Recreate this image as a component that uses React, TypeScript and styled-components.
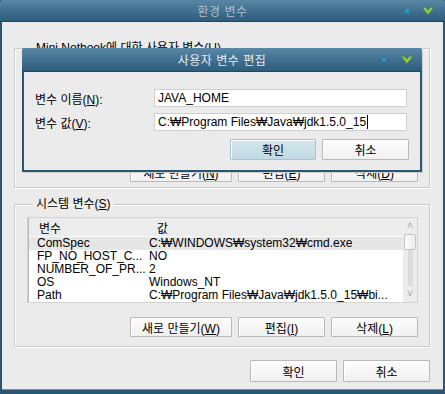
import styled, { createGlobalStyle } from 'styled-components'

// 전역 스타일
const GlobalStyle = createGlobalStyle`
  html, body {
    margin: 0;
    padding: 0;
    background: #ebebeb;
  }
  * {
    box-sizing: border-box;
  }
`

const FONT = `"Liberation Sans", "Noto Sans CJK KR", sans-serif`

// 창 아이콘 (작은 사각형 + 초록색 꺾쇠)
const TitleIcons = ({ small }: { small?: boolean }) => (
  <IconGroup $small={small}>
    <Dot />
    <svg width="12" height="8" viewBox="0 0 12 8">
      <polygon
        points="0.5,0.5 3.5,0.5 6,3.6 8.5,0.5 11.5,0.5 6,7.5"
        fill="#98d448"
        stroke="#5d9a2c"
        strokeWidth="0.8"
        strokeLinejoin="round"
      />
    </svg>
  </IconGroup>
)

const Mn = ({ children }: { children: string }) => <U>{children}</U>

const systemVars = [
  { name: 'ComSpec', value: 'C:₩WINDOWS₩system32₩cmd.exe', selected: true },
  { name: 'FP_NO_HOST_C...', value: 'NO' },
  { name: 'NUMBER_OF_PR...', value: '2' },
  { name: 'OS', value: 'Windows_NT' },
  { name: 'Path', value: 'C:₩Program Files₩Java₩jdk1.5.0_15₩bi...' },
]

const App = () => {
  return (
    <>
      <GlobalStyle />
      <Window>
        <TitleBar>
          <Title>환경 변수</Title>
          <TitleIcons />
        </TitleBar>
        <Body>
          <Group $gap={0}>
            <Legend>
              Mini Notbook에 대한 사용자 변수(<Mn>U</Mn>)
            </Legend>
            <ListBox $height={87} />
            <ButtonRow $top={14}>
              <Button $w={102} $h={20}>새로 만들기(<Mn>N</Mn>)</Button>
              <Button $w={87} $h={20}>편집(<Mn>E</Mn>)</Button>
              <Button $w={87} $h={20}>삭제(<Mn>D</Mn>)</Button>
            </ButtonRow>
          </Group>

          <Group $gap={8}>
            <Legend>
              시스템 변수(<Mn>S</Mn>)
            </Legend>
            <ListBox $height={86}>
              <ListInner>
                <HeaderRow>
                  <HeadCell $w={118}>변수</HeadCell>
                  <HeadCell>값</HeadCell>
                </HeaderRow>
                {systemVars.map((v) => (
                  <Row key={v.name} $selected={v.selected}>
                    <Cell $w={112}>{v.name}</Cell>
                    <Cell>{v.value}</Cell>
                  </Row>
                ))}
              </ListInner>
              <ScrollBar>
                <Arrow>˄</Arrow>
                <Thumb />
                <Track />
                <Arrow>˅</Arrow>
              </ScrollBar>
            </ListBox>
            <ButtonRow $top={14}>
              <Button $w={102} $h={20}>새로 만들기(<Mn>W</Mn>)</Button>
              <Button $w={87} $h={20}>편집(<Mn>I</Mn>)</Button>
              <Button $w={87} $h={20}>삭제(<Mn>L</Mn>)</Button>
            </ButtonRow>
          </Group>

          <ButtonRow $top={13}>
            <Button $w={87} $h={22}>확인</Button>
            <Button $w={87} $h={22}>취소</Button>
          </ButtonRow>
        </Body>

        <Dialog>
          <DialogTitleBar>
            <DialogTitle>사용자 변수 편집</DialogTitle>
            <TitleIcons small />
          </DialogTitleBar>
          <DialogBody>
            <FormGrid>
              <Label>
                변수 이름(<Mn>N</Mn>):
              </Label>
              <Input>JAVA_HOME</Input>
              <Label>
                변수 값(<Mn>V</Mn>):
              </Label>
              <Input>
                C:₩Program Files₩Java₩jdk1.5.0_15
                <Caret />
              </Input>
            </FormGrid>
            <ButtonRow $top={8}>
              <Button $w={86} $h={21} $primary>확인</Button>
              <Button $w={87} $h={21}>취소</Button>
            </ButtonRow>
          </DialogBody>
        </Dialog>
      </Window>
    </>
  )
}

// 스타일
const Window = styled.div`
  position: relative;
  width: 445px;
  height: 394px;
  display: flex;
  flex-direction: column;
  background: #ebebeb;
  border-left: 2px solid #2a5674;
  border-right: 2px solid #2a5674;
  border-bottom: 4px solid #2a5674;
  box-shadow: inset 0 -1px 0 #6f94ad;
  font-family: ${FONT};
  font-size: 12px;
  color: #000;
`

const TitleBar = styled.div`
  position: relative;
  height: 22px;
  margin: 0 -2px;
  display: flex;
  align-items: center;
  justify-content: center;
  background: linear-gradient(#5a87a5, #3f6e8e 55%, #2f5d7c);
  border-bottom: 1px solid #1f4864;
  border-radius: 3px 3px 0 0;
`

const Title = styled.span`
  font-size: 12px;
  color: #a9bfd0;
  letter-spacing: 0.5px;
  margin-top: -1px;
`

const IconGroup = styled.div<{ $small?: boolean }>`
  position: absolute;
  right: ${(p) => (p.$small ? 9 : 11)}px;
  top: 0;
  bottom: 0;
  display: flex;
  align-items: center;
  gap: ${(p) => (p.$small ? 15 : 13)}px;
`

const Dot = styled.span`
  width: 4px;
  height: 4px;
  background: #1b9dc0;
`

const Body = styled.div`
  flex: 1;
  display: flex;
  flex-direction: column;
  padding: 18px 13px 0 12px;
`

const Group = styled.fieldset<{ $gap: number }>`
  margin: ${(p) => p.$gap}px 0 0 0;
  padding: 5px 11px 5px 12px;
  border: 1px solid #c9c9c9;
  box-shadow: inset 1px 1px 0 #fff, 1px 1px 0 #fff;
  min-width: 0;

  & + & {
    padding-bottom: 9px;
  }
`

const Legend = styled.legend`
  margin-left: 6px;
  padding: 0 3px;
  line-height: 16px;
  font-size: 12px;
  white-space: nowrap;
`

const U = styled.span`
  text-decoration: underline;
  text-underline-offset: 1px;
`

const ListBox = styled.div<{ $height: number }>`
  height: ${(p) => p.$height}px;
  display: flex;
  background: #fff;
  border: 1px solid #d2d2d2;
  box-shadow: inset 1px 1px 0 #b8b8b8;
`

const ListInner = styled.div`
  flex: 1;
  display: flex;
  flex-direction: column;
  min-width: 0;
  padding-left: 1px;
`

const HeaderRow = styled.div`
  display: flex;
  height: 19px;
  align-items: center;
  background: #ececec;
  border-bottom: 1px solid #fafafa;
  padding-left: 10px;
  flex-shrink: 0;
`

const HeadCell = styled.span<{ $w?: number }>`
  width: ${(p) => (p.$w ? `${p.$w}px` : 'auto')};
  font-size: 12px;
`

const Row = styled.div<{ $selected?: boolean }>`
  display: flex;
  height: 13px;
  line-height: 13px;
  padding-left: 8px;
  background: ${(p) => (p.$selected ? '#e6e6e6' : 'transparent')};
  flex-shrink: 0;
`

const Cell = styled.span<{ $w?: number }>`
  width: ${(p) => (p.$w ? `${p.$w}px` : 'auto')};
  flex-shrink: 0;
  white-space: nowrap;
  font-size: 12px;
`

const ScrollBar = styled.div`
  width: 14px;
  display: flex;
  flex-direction: column;
  align-items: center;
  background: #ececec;
  padding-bottom: 2px;
`

const Arrow = styled.span`
  height: 14px;
  line-height: 14px;
  font-size: 11px;
  color: #a8a8a8;
`

const Thumb = styled.div`
  width: 12px;
  height: 16px;
  margin-top: 2px;
  background: linear-gradient(90deg, #fbfbfb, #ececec);
  border: 1px solid #c4c4c4;
  border-radius: 2px;
`

const Track = styled.div`
  width: 5px;
  flex: 1;
  background: #dcdcdc;
`

const ButtonRow = styled.div<{ $top: number }>`
  display: flex;
  justify-content: flex-end;
  gap: 6px;
  margin-top: ${(p) => p.$top}px;
`

const Button = styled.button<{ $w: number; $h: number; $primary?: boolean }>`
  width: ${(p) => p.$w}px;
  height: ${(p) => p.$h}px;
  padding: 0;
  font-family: ${FONT};
  font-size: 12px;
  color: #000;
  background: ${(p) =>
    p.$primary ? 'linear-gradient(#d3e6ec, #c2dae3)' : 'linear-gradient(#fdfdfd, #f0f0f0)'};
  border: 1px solid ${(p) => (p.$primary ? '#a9c2cd' : '#b9b9b9')};
  box-shadow: inset 1px 1px 0 #fff;
  border-radius: 1px;
`

const Dialog = styled.div`
  position: absolute;
  left: 20px;
  top: 48px;
  width: 400px;
  height: 124px;
  display: flex;
  flex-direction: column;
  background: #ebebeb;
  border: 2px solid #2a5674;
  border-top: none;
  border-radius: 3px 3px 0 0;
  box-shadow: 1px 1px 0 #d0d0d0;
`

const DialogTitleBar = styled.div`
  position: relative;
  height: 24px;
  margin: 0 -2px;
  display: flex;
  align-items: center;
  justify-content: center;
  background: linear-gradient(#5a87a5, #3f6e8e 55%, #2f5d7c);
  border-bottom: 1px solid #1f4864;
  border-radius: 3px 3px 0 0;
`

const DialogTitle = styled.span`
  font-size: 12px;
  color: #e4edf3;
  letter-spacing: 0.5px;
`

const DialogBody = styled.div`
  flex: 1;
  display: flex;
  flex-direction: column;
  padding: 17px 11px 0 11px;
`

const FormGrid = styled.div`
  display: grid;
  grid-template-columns: 119px 253px;
  row-gap: 6px;
  align-items: center;
`

const Label = styled.span`
  font-size: 12px;
  white-space: nowrap;
`

const Input = styled.div`
  height: 18px;
  display: flex;
  align-items: center;
  padding-left: 3px;
  background: #fff;
  border: 1px solid #cfcfcf;
  font-size: 12px;
  white-space: nowrap;
`

const Caret = styled.span`
  width: 1px;
  height: 14px;
  margin-left: 1px;
  background: #000;
`

export default App
